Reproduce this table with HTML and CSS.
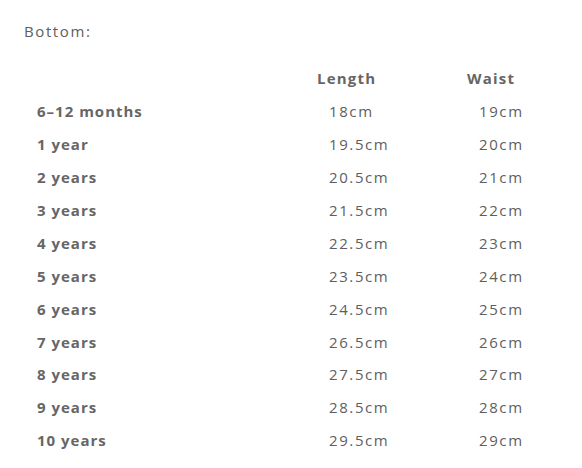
FILE: index.html
```html
<!DOCTYPE html>
<html>
<head>
<meta charset="utf-8">
<link rel="stylesheet" href="styles.css">
</head>
<body>
<div class="page">
  <p class="label">Bottom:</p>
  <div class="size-table">
    <div class="cell head"></div><div class="cell head col">Length</div><div class="cell head col">Waist</div>
    <div class="cell age">6–12 months</div><div class="cell val">18cm</div><div class="cell val">19cm</div>
    <div class="cell age">1 year</div><div class="cell val">19.5cm</div><div class="cell val">20cm</div>
    <div class="cell age">2 years</div><div class="cell val">20.5cm</div><div class="cell val">21cm</div>
    <div class="cell age">3 years</div><div class="cell val">21.5cm</div><div class="cell val">22cm</div>
    <div class="cell age">4 years</div><div class="cell val">22.5cm</div><div class="cell val">23cm</div>
    <div class="cell age">5 years</div><div class="cell val">23.5cm</div><div class="cell val">24cm</div>
    <div class="cell age">6 years</div><div class="cell val">24.5cm</div><div class="cell val">25cm</div>
    <div class="cell age">7 years</div><div class="cell val">26.5cm</div><div class="cell val">26cm</div>
    <div class="cell age">8 years</div><div class="cell val">27.5cm</div><div class="cell val">27cm</div>
    <div class="cell age">9 years</div><div class="cell val">28.5cm</div><div class="cell val">28cm</div>
    <div class="cell age">10 years</div><div class="cell val">29.5cm</div><div class="cell val">29cm</div>
  </div>
</div>
</body>
</html>
```
FILE: styles.css
```css
html, body {
  margin: 0;
  padding: 0;
  background: #fff;
}
.page {
  padding: 21px 0 0 24px;
  font-family: "Open Sans", "Liberation Sans", sans-serif;
  color: #5e5e5e;
}
.label {
  margin: 0;
  font-size: 15px;
  line-height: 20px;
  letter-spacing: 1.6px;
}
.size-table {
  margin-top: 21px;
  display: grid;
  grid-template-columns: 293px 150px 1fr;
  grid-auto-rows: 32.9px;
  align-items: center;
}
.cell {
  font-size: 15px;
  line-height: 20px;
}
.head {
  font-weight: 700;
  color: #666;
  letter-spacing: 1.2px;
}
.age {
  padding-left: 13px;
  font-weight: 700;
  color: #666;
  letter-spacing: 1px;
}
.val {
  padding-left: 12px;
  letter-spacing: 1.6px;
  font-weight: 400;
}
```
